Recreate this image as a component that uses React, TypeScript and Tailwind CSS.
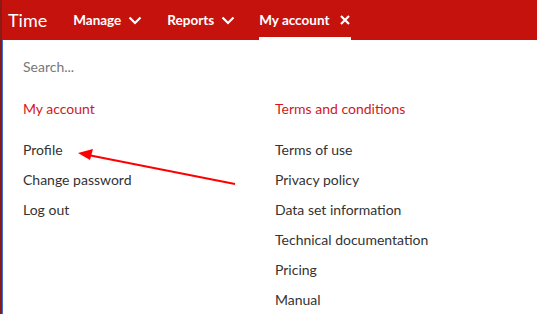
import React from "react";

const myAccount = ["Profile", "Change password", "Log out"];
const terms = [
  "Terms of use",
  "Privacy policy",
  "Data set information",
  "Technical documentation",
  "Pricing",
  "Manual",
];

function Chevron() {
  return (
    <svg width="14" height="9" viewBox="0 0 14 9" className="ml-[7px]">
      <path d="M1.5 1.5 7 7l5.5-5.5" fill="none" stroke="white" strokeWidth="2.2" />
    </svg>
  );
}

function Cross() {
  return (
    <svg width="10" height="10" viewBox="0 0 10 10" className="ml-[11px]">
      <path d="M1 1l8 8M9 1 1 9" fill="none" stroke="white" strokeWidth="2.2" />
    </svg>
  );
}

export default function App() {
  return (
    <div
      className="relative w-[537px] h-[314px] overflow-hidden bg-white border-l-2 border-[#8c1a14] shadow-[inset_1px_0_0_#3d6fd6]"
      style={{ fontFamily: "Lato, 'Open Sans', sans-serif" }}
    >
      {/* --- TOP BAR --- */}
      <div className="flex items-stretch h-10 bg-[#c5120c] text-white">
        <div className="pl-[6px] pr-[26px] flex items-center text-[18px] leading-none">Time</div>
        <div className="flex items-center pr-[25px] font-bold text-[13.5px]">
          Manage <Chevron />
        </div>
        <div className="flex items-center pr-[24px] font-bold text-[13.5px]">
          Reports <Chevron />
        </div>
        <div className="flex items-center font-bold text-[13.5px] border-b-[3px] border-white pt-[3px] pr-[1px]">
          My account <Cross />
        </div>
      </div>

      {/* --- MENU --- */}
      <div className="px-[21px] pt-[17px]">
        <div className="text-[14px] text-[#777] h-[20px] leading-[20px]">Search...</div>
        <div className="flex mt-[22px]">
          <div className="w-[252px]">
            <div className="text-[14px] text-[#d2161b] leading-[20px]">My account</div>
            <ul className="mt-[21px]">
              {myAccount.map((item) => (
                <li key={item} className="text-[14px] text-[#333] h-[30px] leading-[20px]">
                  {item}
                </li>
              ))}
            </ul>
          </div>
          <div>
            <div className="text-[14px] text-[#d2161b] leading-[20px]">Terms and conditions</div>
            <ul className="mt-[21px]">
              {terms.map((item) => (
                <li key={item} className="text-[14px] text-[#333] h-[30px] leading-[20px]">
                  {item}
                </li>
              ))}
            </ul>
          </div>
        </div>
      </div>

      {/* annotation arrow */}
      <svg className="absolute left-0 top-0 pointer-events-none" width="537" height="314">
        <line x1="233" y1="184" x2="86" y2="155" stroke="#ff0000" strokeWidth="2" />
        <polygon points="76,153 91,149 88,160" fill="#ff0000" />
      </svg>
    </div>
  );
}
